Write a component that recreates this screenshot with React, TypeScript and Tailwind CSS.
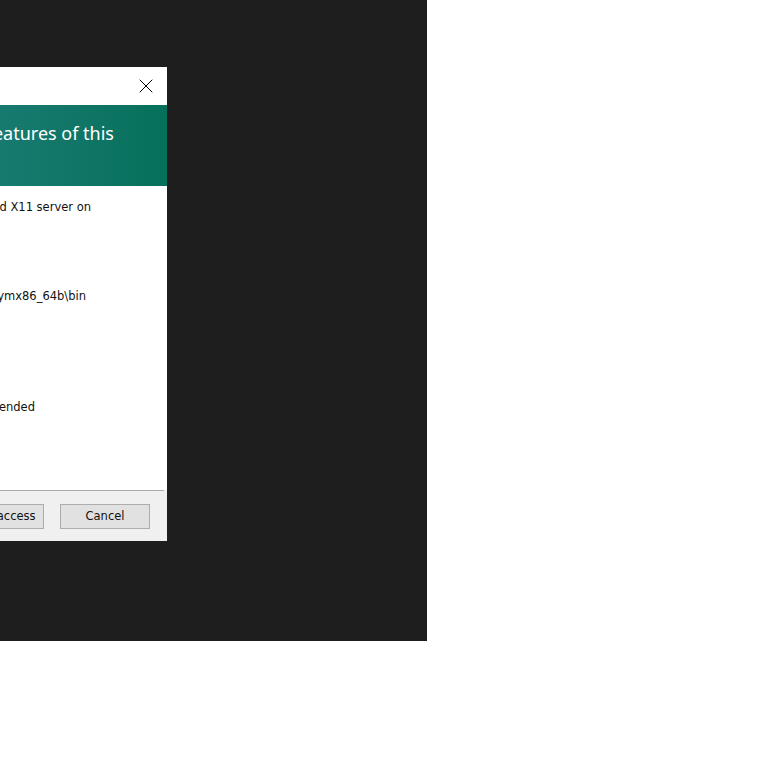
import { X } from "lucide-react";

const bodyFont = { fontFamily: '"DejaVu Sans", Verdana, sans-serif' };

export default function App() {
  return (
    <div className="w-[758px] h-[758px] bg-white">
      {/* desktop area */}
      <div className="w-[427px] h-[641px] bg-[#1e1e1e] pt-[67px]">
        {/* security alert dialog, cut off at the left edge */}
        <div className="w-[167px] h-[474px] bg-white flex flex-col overflow-hidden">
          {/* title bar */}
          <div className="h-[38px] flex items-center justify-end pr-[9px]">
            <X size={24} strokeWidth={1} className="text-black" />
          </div>

          {/* header */}
          <div className="h-[81px] bg-gradient-to-r from-[#177a70] to-[#06705b] pt-[16px] flex justify-end pr-[53px]">
            <div className="w-[400px] flex justify-end overflow-hidden">
              <span
                className="whitespace-nowrap text-white text-[18px] leading-6"
                style={{ fontFamily: '"Noto Sans", "Open Sans", sans-serif' }}
              >
                Windows Defender Firewall has blocked some features of this
              </span>
            </div>
          </div>

          {/* body */}
          <div className="flex-1 flex flex-col text-[11.5px] leading-[15px] text-[#111]" style={bodyFont}>
            <div className="mt-[14px] flex justify-end pr-[76px]">
              <span className="whitespace-nowrap">Windows Defender Firewall has blocked some features of MobaXterm enhanced X11 server on</span>
            </div>
            <div className="mt-[74px] flex justify-end pr-[81px]">
              <span className="whitespace-nowrap">Path: C:\users\user\documents\mobaxterm\slash\bin\polymx86_64b\bin</span>
            </div>
            <div className="mt-[96px] flex justify-end pr-[132px]">
              <span className="whitespace-nowrap">Private networks, such as my home or work network (recommended</span>
            </div>
          </div>

          {/* footer */}
          <div className="h-[51px] bg-[#f0f0f0] flex flex-col">
            <div className="h-px bg-[#a9a9a9] mr-[3px]" />
            <div className="flex justify-end gap-[16px] pr-[17px] pt-[13px]" style={bodyFont}>
              <button className="w-[90px] h-[25px] shrink-0 bg-[#e1e1e1] border border-[#adadad] text-[11.5px] text-[#111] whitespace-nowrap">
                Allow access
              </button>
              <button className="w-[90px] h-[25px] shrink-0 bg-[#e1e1e1] border border-[#adadad] text-[11.5px] text-[#111]">
                Cancel
              </button>
            </div>
          </div>
        </div>
      </div>
    </div>
  );
}
